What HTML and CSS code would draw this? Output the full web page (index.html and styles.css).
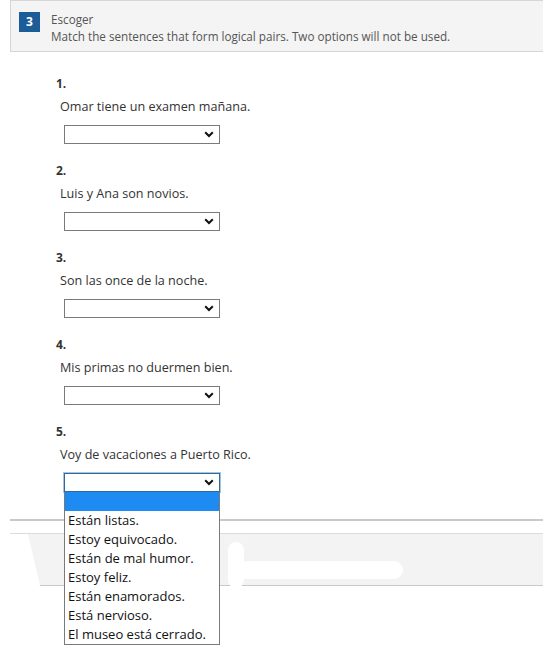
FILE: index.html
```html
<!DOCTYPE html>
<html lang="es">
<head>
<meta charset="utf-8">
<title>Escoger</title>
<link rel="stylesheet" href="styles.css">
</head>
<body>
<div class="page">
  <div class="header">
    <div class="badge">3</div>
    <div class="header-text">
      <div class="title">Escoger</div>
      <div class="instr">Match the sentences that form logical pairs. Two options will not be used.</div>
    </div>
  </div>

  <div class="items">
    <div class="item">
      <div class="num">1.</div>
      <div class="sentence">Omar tiene un examen mañana.</div>
      <div class="select"><svg class="chev" width="10" height="7" viewBox="0 0 10 7"><path d="M1.2 1.2 L5 5 L8.8 1.2" fill="none" stroke="#111" stroke-width="2"/></svg></div>
    </div>
    <div class="item">
      <div class="num">2.</div>
      <div class="sentence">Luis y Ana son novios.</div>
      <div class="select"><svg class="chev" width="10" height="7" viewBox="0 0 10 7"><path d="M1.2 1.2 L5 5 L8.8 1.2" fill="none" stroke="#111" stroke-width="2"/></svg></div>
    </div>
    <div class="item">
      <div class="num">3.</div>
      <div class="sentence">Son las once de la noche.</div>
      <div class="select"><svg class="chev" width="10" height="7" viewBox="0 0 10 7"><path d="M1.2 1.2 L5 5 L8.8 1.2" fill="none" stroke="#111" stroke-width="2"/></svg></div>
    </div>
    <div class="item">
      <div class="num">4.</div>
      <div class="sentence">Mis primas no duermen bien.</div>
      <div class="select"><svg class="chev" width="10" height="7" viewBox="0 0 10 7"><path d="M1.2 1.2 L5 5 L8.8 1.2" fill="none" stroke="#111" stroke-width="2"/></svg></div>
    </div>
    <div class="item">
      <div class="num">5.</div>
      <div class="sentence">Voy de vacaciones a Puerto Rico.</div>
      <div class="select-wrap">
        <div class="select focused"><svg class="chev" width="10" height="7" viewBox="0 0 10 7"><path d="M1.2 1.2 L5 5 L8.8 1.2" fill="none" stroke="#111" stroke-width="2"/></svg></div>
        <ul class="dropdown">
          <li class="opt selected">&nbsp;</li>
          <li class="opt">Están listas.</li>
          <li class="opt">Estoy equivocado.</li>
          <li class="opt">Están de mal humor.</li>
          <li class="opt">Estoy feliz.</li>
          <li class="opt">Están enamorados.</li>
          <li class="opt">Está nervioso.</li>
          <li class="opt">El museo está cerrado.</li>
        </ul>
      </div>
    </div>
  </div>

  <div class="divider"></div>

  <div class="header2">
    <div class="blot blot-left"></div>
    <div class="blot blot-stem"></div>
    <div class="blot blot-bar"></div>
  </div>
</div>
</body>
</html>
```
FILE: styles.css
```css
* { box-sizing: border-box; }
html, body { margin: 0; padding: 0; background: #fff; }
body {
  font-family: "Open Sans", "Liberation Sans", sans-serif;
  color: #333;
  overflow: hidden;
}
.page { width: 543px; min-height: 657px; }

.header {
  margin-left: 10px;
  height: 52px;
  background: #f4f4f4;
  border: 1px solid #d6d6d6;
  border-right: none;
  display: flex;
  align-items: flex-start;
  padding: 11px 0 0 8px;
}
.badge {
  width: 21px;
  height: 20px;
  background: #1c5d97;
  color: #fff;
  font-weight: 700;
  font-size: 12px;
  line-height: 20px;
  text-align: center;
  flex: none;
}
.header-text {
  margin-left: 11px;
  font-size: 11.7px;
  line-height: 17px;
  color: #555;
  margin-top: -1px;
}

.items {
  padding: 23px 0 0 56px;
  display: flex;
  flex-direction: column;
  gap: 18px;
}
.item {
  display: flex;
  flex-direction: column;
  align-items: flex-start;
}
.num {
  font-weight: 700;
  font-size: 12px;
  line-height: 18px;
  color: #333;
}
.sentence {
  margin-top: 5px;
  margin-left: 4px;
  font-size: 12.6px;
  line-height: 18px;
  color: #333;
}
.select-wrap { position: relative; margin-left: 8px; margin-top: 9px; }
.select {
  margin-left: 8px;
  margin-top: 9px;
  width: 156px;
  height: 19px;
  border: 1px solid #7a7a7a;
  background: #fff;
  display: flex;
  align-items: center;
  justify-content: flex-end;
  padding-right: 5px;
}
.select-wrap .select { margin: 0; }
.select.focused {
  border-color: #2f6a9e;
  box-shadow: 0 0 0 1px #a9c3dc;
}
.chev { display: block; }

.dropdown {
  position: absolute;
  top: 19px;
  left: 0;
  width: 156px;
  margin: 0;
  padding: 0;
  list-style: none;
  background: #fff;
  border: 1px solid #7a7a7a;
  border-top: none;
  z-index: 5;
}
.opt {
  height: 19px;
  line-height: 19px;
  font-size: 13px;
  color: #111;
  padding-left: 3px;
  white-space: nowrap;
}
.opt.selected { background: #1e8bf3; }

.divider {
  margin: 27px 0 0 10px;
  height: 2px;
  background: #c9c9c9;
}
.header2 {
  position: relative;
  margin: 12px 0 0 10px;
  height: 53px;
  background: #f3f3f3;
  border-top: 1px solid #dcdcdc;
  border-bottom: 1px solid #c9c9c9;
}
.blot { position: absolute; background: #fff; }
.blot-left { left: 0; top: 0; width: 30px; height: 52px; clip-path: polygon(0 0, 60% 0, 100% 100%, 0 100%); }
.blot-stem { left: 218px; top: 8px; width: 16px; height: 46px; border-radius: 8px; }
.blot-bar { left: 228px; top: 27px; width: 165px; height: 18px; border-radius: 9px; }
```
